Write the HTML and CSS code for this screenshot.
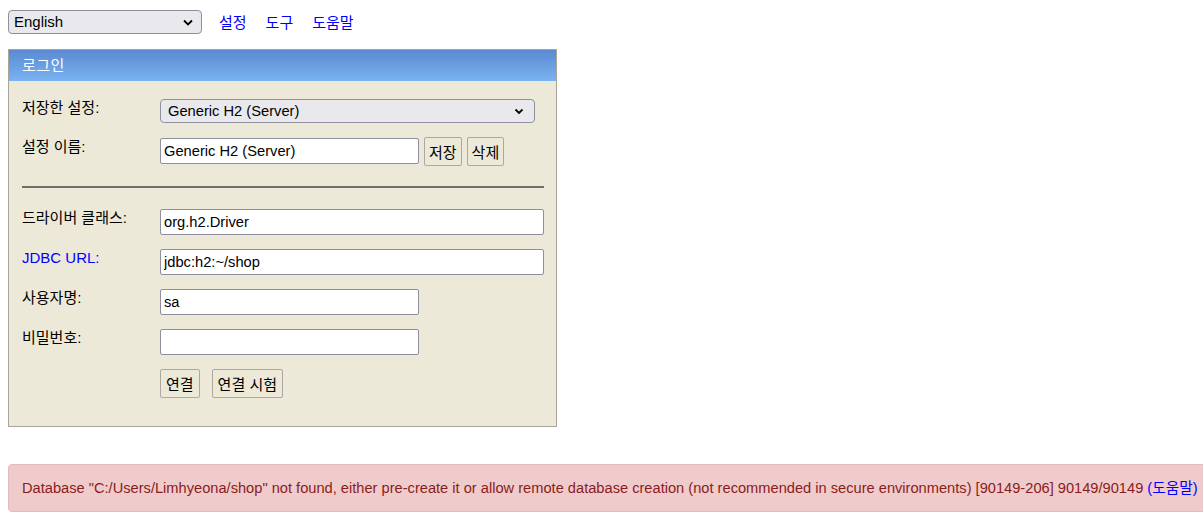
FILE: index.html
```html
<!DOCTYPE html>
<html lang="ko">
<head>
    <meta charset="UTF-8">
    <meta name="viewport" content="width=device-width, initial-scale=1.0">
    <title>H2 Console</title>
    <link rel="stylesheet" href="styles.css">
</head>
<body>
    <div class="topbar">
        <span class="select-wrap">
            <select class="lang">
                <option>English</option>
            </select>
            <svg class="chevron" width="10" height="7" viewBox="0 0 10 7"><path d="M1 1.5 L5 5.5 L9 1.5" fill="none" stroke="#000" stroke-width="1.8"/></svg>
        </span>
        <a href="#">설정</a>
        <a href="#">도구</a>
        <a href="#">도움말</a>
    </div>

    <div class="login">
        <div class="login-head">로그인</div>
        <div class="login-body">
            <div class="row row-first">
                <label>저장한 설정:</label>
                <span class="select-wrap">
                    <select class="saved">
                        <option>Generic H2 (Server)</option>
                    </select>
                    <svg class="chevron" width="10" height="7" viewBox="0 0 10 7"><path d="M1.5 1.5 L5 5 L8.5 1.5" fill="none" stroke="#000" stroke-width="1.8"/></svg>
                </span>
            </div>
            <div class="row">
                <label class="pad1">설정 이름:</label>
                <input type="text" class="short mt1" value="Generic H2 (Server)">
                <button class="btn">저장</button>
                <button class="btn">삭제</button>
            </div>

            <hr>

            <div class="row">
                <label>드라이버 클래스:</label>
                <input type="text" class="wide" value="org.h2.Driver">
            </div>
            <div class="row">
                <label class="link">JDBC URL:</label>
                <input type="text" class="wide" value="jdbc:h2:~/shop">
            </div>
            <div class="row">
                <label>사용자명:</label>
                <input type="text" class="short" value="sa">
            </div>
            <div class="row">
                <label>비밀번호:</label>
                <input type="password" class="short" value="">
            </div>
            <div class="row">
                <label></label>
                <button class="btn wide-pad">연결</button>
                <button class="btn wide-pad gap">연결 시험</button>
            </div>
        </div>
    </div>

    <div class="error">Database "C:/Users/Limhyeona/shop" not found, either pre-create it or allow remote database creation (not recommended in secure environments) [90149-206] 90149/90149 <a href="#">(도움말)</a></div>
</body>
</html>
```

FILE: styles.css
```css
html {
    overflow: hidden;
}
body {
    font-family: "Liberation Sans", Arial, "Noto Sans CJK KR", sans-serif;
    font-size: 14px;
    margin: 0;
    padding: 10px 8px;
    background: white;
    color: black;
}
a {
    color: #0000ff;
    text-decoration: none;
}
.topbar {
    display: flex;
    align-items: center;
    height: 23px;
}
.topbar a {
    font-size: 15px;
    margin-left: 19px;
}
.topbar a:first-of-type {
    margin-left: 17px;
}
.select-wrap {
    position: relative;
    display: inline-block;
    line-height: 0;
}
.chevron {
    position: absolute;
    right: 9px;
    top: 9px;
    pointer-events: none;
}
select {
    appearance: none;
    -webkit-appearance: none;
    font-family: inherit;
    background-color: #e9e9ed;
    border: 1px solid #8f8f9d;
    border-radius: 4px;
    color: black;
}
.lang {
    width: 194px;
    height: 24px;
    font-size: 15px;
    padding: 0 5px;
}
.login {
    width: 547px;
    margin-top: 16px;
    border: 1px solid #a9a699;
    background: #ece9d8;
}
.login-head {
    height: 31px;
    line-height: 31px;
    padding-left: 13px;
    color: white;
    font-size: 15px;
    letter-spacing: 0.5px;
    background: linear-gradient(#5a89d2, #7ab3f1);
}
.login-body {
    padding: 18px 12px 28px 13px;
}
.row {
    display: flex;
    align-items: flex-start;
    margin-top: 14px;
}
.row-first {
    margin-top: 0;
}
.row label {
    width: 138px;
    flex: none;
    line-height: 18px;
    font-size: 15px;
}
.row label.pad1 {
    padding-top: 1px;
}
.row label.link {
    color: #0000ff;
}
.saved {
    width: 375px;
    height: 24px;
    font-size: 14.7px;
    padding: 0 7px;
}
.saved + .chevron {
    right: 11px;
    top: 9px;
}
input {
    height: 26px;
    box-sizing: border-box;
    border: 1px solid #8f8f9d;
    border-radius: 2px;
    font-family: inherit;
    font-size: 14.7px;
    padding: 0 3px;
    background: white;
}
input.wide {
    width: 384px;
}
input.short {
    width: 259px;
}
.mt1 {
    margin-top: 1px;
}
.btn {
    height: 29px;
    box-sizing: border-box;
    padding: 0 4px;
    background: #ece9d8;
    border: 1px solid #aaa8a0;
    border-radius: 2px;
    font-family: inherit;
    font-size: 15px;
    color: black;
    margin-left: 5px;
}
.btn.wide-pad {
    padding: 0 5px;
}
.row label + .btn {
    margin-left: 0;
}
.btn.gap {
    margin-left: 12px;
}
hr {
    height: 0;
    margin: 20px 0 0 0;
    border: none;
    border-top: 2px solid #6e6d69;
}
hr + .row {
    margin-top: 21px;
}
.error {
    display: inline-block;
    white-space: nowrap;
    margin-top: 37px;
    padding: 14px 13px;
    line-height: 18px;
    background: #efcbcb;
    border: 1px solid #e2bcbc;
    border-radius: 4px;
    color: #8b1c1c;
    font-size: 14.65px;
}
```
